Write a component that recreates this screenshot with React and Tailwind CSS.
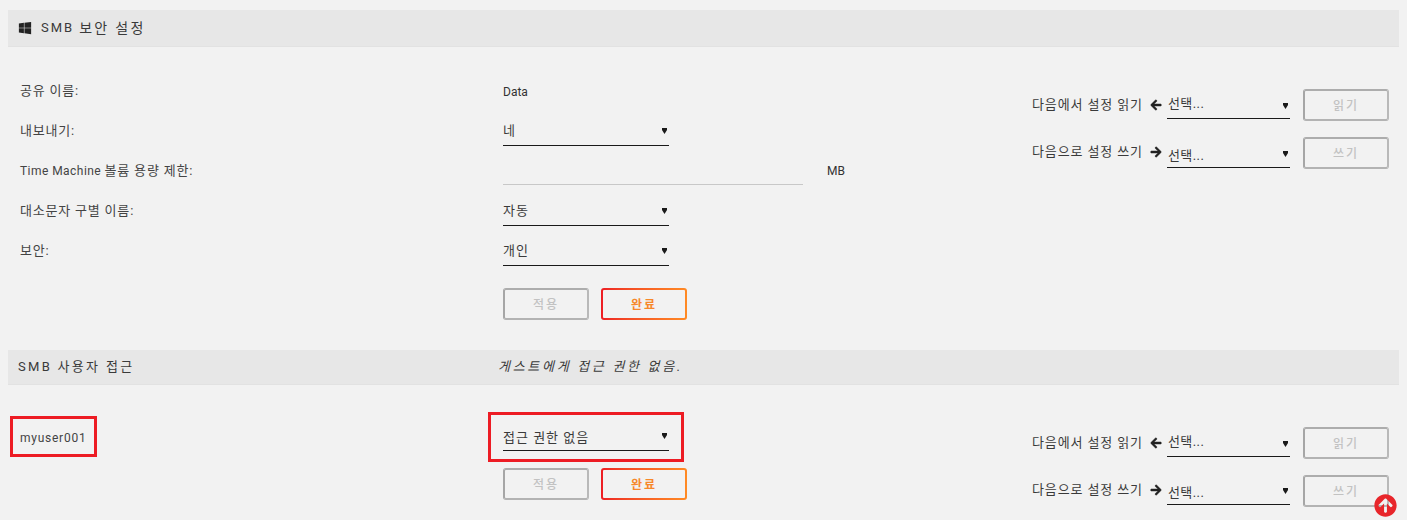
import { FaWindows, FaArrowLeft, FaArrowRight, FaArrowCircleUp } from "react-icons/fa";

const font = { fontFamily: '"Roboto", "Noto Sans CJK KR", sans-serif' };

function Select({ value, width = "w-[166px]", textClass = "tracking-[1px]", caretClass = "" }) {
  return (
    <div className={`${width} h-[30px] flex items-center justify-between border-b border-[#1a1a1a] text-[13px] text-[#3a3a3a]`}>
      <span className={textClass}>{value}</span>
      <svg width="5" height="6" viewBox="0 0 5 6" className={`mr-[2px] ${caretClass}`}>
        <path d="M0 0h5v2L2.5 6 0 2z" fill="#1a1a1a" />
      </svg>
    </div>
  );
}

function DisabledButton({ label }) {
  return (
    <button className="w-[86px] h-[32px] pt-[1px] rounded-[3px] border-2 border-l-[#a6a6a6] border-t-[#adadad] border-r-[#b9b9b9] border-b-[#b3b3b3] text-[12px] text-[#c2c2c2] tracking-[2px] font-medium">
      {label}
    </button>
  );
}

function DoneButton() {
  return (
    <div className="w-[86px] h-[32px] p-[2px] rounded-[3px] bg-gradient-to-r from-[#ed1c24] to-[#ff8a24]">
      <button className="w-full h-full pt-[1px] rounded-[1px] bg-[#f2f2f2] text-[12px] text-[#f7882a] tracking-[2px] font-bold">
        완료
      </button>
    </div>
  );
}

function Actions() {
  return (
    <div className="flex gap-[12px]">
      <DisabledButton label="적용" />
      <DoneButton />
    </div>
  );
}

function SettingsTransfer({ lowerLine }) {
  return (
    <div className="flex flex-col gap-[16px] text-[13px] text-[#3a3a3a]">
      <div className="flex items-center h-[32px]">
        <span className="w-[118px] tracking-[0.87px]">다음에서 설정 읽기</span>
        <FaArrowLeft className="w-[12px] h-[12px] text-[#222] stroke-current stroke-[24px] mr-[5px]" />
        <div className="mt-[-3px]">
          <Select
            value="선택..."
            width="w-[123px]"
            textClass="mt-[2px] pl-[1px] tracking-[0.4px]"
            caretClass="mt-[5px]"
          />
        </div>
        <div className="ml-[13px]"><DisabledButton label="읽기" /></div>
      </div>
      <div className="flex items-center h-[32px]">
        <span className="w-[118px] mt-[-2px] tracking-[0.87px]">다음으로 설정 쓰기</span>
        <FaArrowRight className="w-[12px] h-[12px] text-[#222] stroke-current stroke-[24px] mr-[5px] mt-[-2px]" />
        <div className={lowerLine ? "mt-[-3px]" : "mt-[-1px]"}>
          <Select
            value="선택..."
            width="w-[123px]"
            textClass="mt-[8px] pl-[1px] tracking-[0.4px]"
            caretClass="mt-[4px]"
          />
        </div>
        <div className="ml-[13px]"><DisabledButton label="쓰기" /></div>
      </div>
    </div>
  );
}

function FormRow({ label, children }) {
  return (
    <div className="flex items-center h-[40px] pl-[12px] text-[13px] text-[#444]">
      <span className="w-[483px] tracking-[0.8px]">{label}</span>
      {children}
    </div>
  );
}

export default function App() {
  return (
    <div className="relative h-screen overflow-hidden bg-[#f2f2f2] px-[8px] pt-[10px]" style={font}>
      {/* SMB security */}
      <div className="flex items-center h-[37px] pl-[10px] bg-[#e7e7e7] border-b border-[#e2e2e2] text-[14px] text-[#3a3a3a] tracking-[2.3px]">
        <FaWindows className="w-[14px] h-[14px] text-[#222] mr-[9px]" />
        <span className="text-[13px] tracking-[2px] mr-[5px]">SMB</span>
        보안 설정
      </div>
      <div className="flex h-[303px]">
        <div className="w-[1024px] pt-[24px]">
          <FormRow label="공유 이름:">
            <span className="mt-[2px] text-[12px] text-[#333]">Data</span>
          </FormRow>
          <FormRow label="내보내기:">
            <Select value="네" />
          </FormRow>
          <FormRow
            label={
              <>
                <span className="text-[12px] tracking-[0.45px]">Time Machine </span>
                볼륨 용량 제한:
              </>
            }
          >
            <div className="w-[300px] h-[28px] border-b border-[#c8c8c8]" />
            <span className="ml-[24px] text-[12px] text-[#333]">MB</span>
          </FormRow>
          <FormRow label="대소문자 구별 이름:">
            <Select value="자동" />
          </FormRow>
          <FormRow label="보안:">
            <Select value="개인" />
          </FormRow>
          <div className="mt-[17px] ml-[495px]">
            <Actions />
          </div>
        </div>
        <div className="pt-[42px]">
          <SettingsTransfer />
        </div>
      </div>

      {/* SMB user access */}
      <div className="flex items-center h-[35px] pl-[10px] bg-[#e7e7e7] border-b border-[#e2e2e2] text-[13px] text-[#3a3a3a] tracking-[2.3px]">
        <span className="w-[480px]">SMB 사용자 접근</span>
        <span className="italic tracking-[2.7px]">게스트에게 접근 권한 없음.</span>
      </div>
      <div className="flex">
        <div className="w-[1024px] flex">
          <div className="w-[480px] pt-[31px]">
            <div className="w-[87px] h-[41px] ml-[2px] pt-[3px] flex items-center pl-[7px] border-[3px] border-[#ed1c24] text-[12px] text-[#444] tracking-[0.75px]">
              myuser001
            </div>
          </div>
          <div className="pt-[27px]">
            <div className="w-[196px] h-[50px] pl-[12px] pt-[6px] border-[3px] border-[#ed1c24]">
              <Select value="접근 권한 없음" textClass="mt-[4px] tracking-[1px]" />
            </div>
            <div className="mt-[6px] ml-[15px]">
              <Actions />
            </div>
          </div>
        </div>
        <div className="pt-[42px]">
          <SettingsTransfer lowerLine />
        </div>
      </div>

      <FaArrowCircleUp className="absolute right-[10px] bottom-[3px] w-[23px] h-[23px] text-[#e8262b]" />
    </div>
  );
}
